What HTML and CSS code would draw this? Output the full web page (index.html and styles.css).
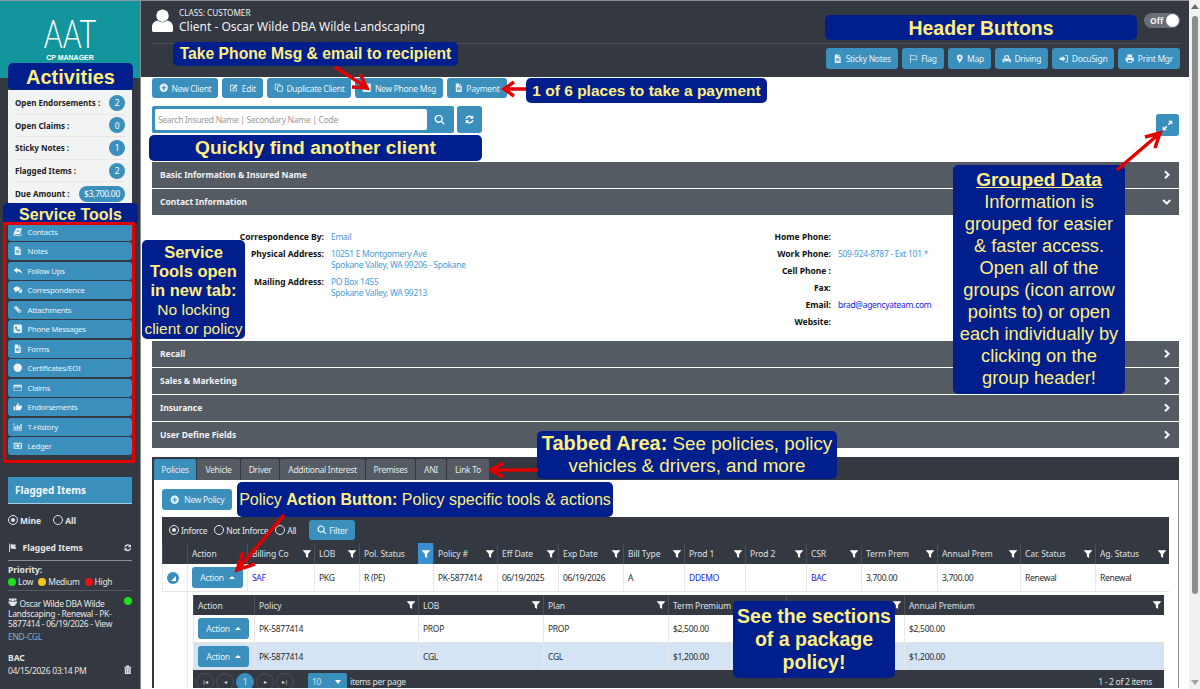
FILE: index.html
```html
<!DOCTYPE html>
<html lang="en">

<head>
    <meta charset="UTF-8" />
    <title>Client - Oscar Wilde DBA Wilde Landscaping</title>
    <link rel="stylesheet" href="styles.css">
</head>

<body>
    <svg class="defs" width="0" height="0">
        <symbol id="i-plus" viewBox="0 0 16 16"><path fill-rule="evenodd" d="M8 1a7 7 0 1 1 0 14A7 7 0 0 1 8 1zM7 4v3H4v2h3v3h2V9h3V7H9V4z"/></symbol>
        <symbol id="i-edit" viewBox="0 0 16 16"><path d="M2 3h8L8.500 4.500H3.500v8h8V9L13 7.500V14H2z"/><path d="M12.500 2 14.500 4 8 10.500 5.500 11 6 8.500z"/></symbol>
        <symbol id="i-copy" viewBox="0 0 16 16"><path fill="none" stroke="currentColor" stroke-width="1.400" d="M6 5h8v9H6zM6 11H2V2h8v3"/></symbol>
        <symbol id="i-phone" viewBox="0 0 16 16"><path fill-rule="evenodd" d="M3 1h10a2 2 0 0 1 2 2v10a2 2 0 0 1-2 2H3a2 2 0 0 1-2-2V3a2 2 0 0 1 2-2zm2 2.500L3.500 5c0 4 3.500 7.500 7.500 7.500l1.500-1.500-2.500-2-1.200 1C7.500 9.500 6.500 8.500 6 7.200l1-1.200z"/></symbol>
        <symbol id="i-file" viewBox="0 0 16 16"><path fill-rule="evenodd" d="M3 1h6v4h4v10H3zM10 1l3 3h-3zM5 7v1h6V7zm0 2v1h6V9zm0 2v1h6v-1z"/></symbol>
        <symbol id="i-search" viewBox="0 0 16 16"><path fill-rule="evenodd" d="M7 1a6 6 0 0 1 4.800 9.500L15.500 14 14 15.500l-3.600-3.700A6 6 0 1 1 7 1zm0 2a4 4 0 1 0 0 8 4 4 0 0 0 0-8z"/></symbol>
        <symbol id="i-refresh" viewBox="0 0 16 16"><path d="M13.500 2v5h-5l1.800-1.800A4 4 0 0 0 4.200 7H2.100a6 6 0 0 1 9.700-3.300zM2.500 14V9h5l-1.800 1.800A4 4 0 0 0 11.800 9h2.100a6 6 0 0 1-9.700 3.300z"/></symbol>
        <symbol id="i-flag" viewBox="0 0 16 16"><path d="M2 1h1.500v14H2zM4.500 2.500c3-1.500 5 1 9 0L12 6.500l2 3c-4 1.500-6-1-9.500 0z"/></symbol>
        <symbol id="i-flag-o" viewBox="0 0 16 16"><path d="M2 1h1.200v14H2z"/><path fill="none" stroke="currentColor" stroke-width="1.200" d="M3.500 3c3.500-1.500 6 1 10 0l-1.500 3.500 1.500 3c-4 1-6.500-1.500-10 0"/></symbol>
        <symbol id="i-marker" viewBox="0 0 16 16"><path fill-rule="evenodd" d="M8 1a5 5 0 0 1 5 5c0 3-5 9-5 9S3 9 3 6a5 5 0 0 1 5-5zm0 3a2 2 0 1 0 0 4 2 2 0 0 0 0-4z"/></symbol>
        <symbol id="i-car" viewBox="0 0 16 16"><path fill-rule="evenodd" d="M5 2h6l2 6 2 1v5h-3v-2H4v2H1V9l2-1zm1 2L5 7.500h6L10 4zM3 9.500v1.500h2V9.500zm8 0v1.500h2V9.500z"/></symbol>
        <symbol id="i-signin" viewBox="0 0 16 16"><path d="M1 6h5V3l5 5-5 5v-3H1z"/><path d="M10 2h5v12h-5v-1.500h3.500v-9H10z"/></symbol>
        <symbol id="i-print" viewBox="0 0 16 16"><path fill-rule="evenodd" d="M4 1h8v4H4zM1 6h14v6h-3v3H4v-3H1zm4 4v4h6v-4z"/></symbol>
        <symbol id="i-expand" viewBox="0 0 16 16"><path d="M9 1h6v6l-2.200-2.200-2.800 2.800L8.400 6l2.800-2.800zM7 15H1V9l2.200 2.200L6 8.400 7.600 10l-2.800 2.800z"/></symbol>
        <symbol id="i-right" viewBox="0 0 16 16"><path fill="none" stroke="currentColor" stroke-width="3.500" d="M5 2l6 6-6 6"/></symbol>
        <symbol id="i-down" viewBox="0 0 16 16"><path fill="none" stroke="currentColor" stroke-width="3.500" d="M2 5l6 6 6-6"/></symbol>
        <symbol id="i-user" viewBox="0 0 24 24"><circle cx="12" cy="7" r="6.500"/><path d="M1 23v-4c0-5 4-6.500 6-7 3 2.500 7 2.500 10 0 2 .500 6 2 6 7v4a2 2 0 0 1-2 1H3a2 2 0 0 1-2-1z"/></symbol>
        <symbol id="i-book" viewBox="0 0 16 16"><path fill-rule="evenodd" d="M5 2h10l-3 10H3c-1 0-1 2 0 2h10l1-3 1 .500L13.500 15H3c-2.500 0-2.500-2-2-4zm1.500 3v1h5V5zm-.500 2v1h5V7z"/></symbol>
        <symbol id="i-reply" viewBox="0 0 16 16"><path d="M7 2v3c5 0 8 3 8 9-1.500-3.500-4-5-8-5v3L1 7z"/></symbol>
        <symbol id="i-comments" viewBox="0 0 16 16"><path d="M6.500 2.500c3 0 5.500 1.700 5.500 4s-2.500 4-5.500 4l-3 2 .500-2.500C2 9.500 1 8 1 6.500c0-2.300 2.500-4 5.500-4z"/><path d="M13 6c1.500.700 2.500 2 2.500 3.500 0 1.200-.700 2-1.500 2.800l.500 2-2.500-1.500c-1.500.200-3-.300-4-1.300 3 0 5.500-2.500 5-5.500z"/></symbol>
        <symbol id="i-clip" viewBox="0 0 16 16"><path d="M3 2.500a2.500 2.500 0 0 1 3.500 0l7 7a2.500 2.500 0 0 1-3.500 3.500L4 7a1.500 1.500 0 0 1 2-2l5 5-1 1-5-5v.500l6 6a1.200 1.200 0 0 0 1.500-1.500l-7-7a1 1 0 0 0-1.500 1.500l6 6-1 1-6-6A2.500 2.500 0 0 1 3 2.500z"/></symbol>
        <symbol id="i-cert" viewBox="0 0 16 16"><circle cx="8" cy="8" r="7"/></symbol>
        <symbol id="i-card" viewBox="0 0 16 16"><path fill-rule="evenodd" d="M1 3h14v10H1zm1 3v1h12V6zm0 2v4h12V8z" /></symbol>
        <symbol id="i-thumb" viewBox="0 0 16 16"><path d="M1 7h3v7H1zM5 7l3-5.500c1.500 0 2 1 1.500 2.500L9 6h5c1.500 0 1.500 2 .700 2.500.500 1 0 1.800-.700 2 .300 1-.200 1.800-.800 2 0 1-.700 1.500-1.700 1.500H7c-1 0-2-.500-2-1z"/></symbol>
        <symbol id="i-chart" viewBox="0 0 16 16"><path d="M1 2h1.200v11H15v1.200H1zM3.500 8h2v4h-2zM6.500 5h2v7h-2zM9.500 7h2v5h-2zM12.500 3h2v9h-2z"/></symbol>
        <symbol id="i-money" viewBox="0 0 16 16"><path fill-rule="evenodd" d="M1 3h14v10H1zm1.500 1.500v7h11v-7zM8 5.500a2.500 2.500 0 1 1 0 5 2.500 2.500 0 0 1 0-5zM3.500 6h1v4h-1zm8 0h1v4h-1z"/></symbol>
        <symbol id="i-filter" viewBox="0 0 16 16"><path d="M1 2h14L9.800 8v6.500L6.200 12V8z"/></symbol>
        <symbol id="i-trash" viewBox="0 0 16 16"><path fill-rule="evenodd" d="M6 1h4l1 2h3v1.500H2V3h3zM3 5.500h10V15H3zM5.500 7v6.500h1V7zm4 0v6.500h1V7z"/></symbol>
        <symbol id="i-users" viewBox="0 0 16 16"><circle cx="3.500" cy="4" r="2"/><circle cx="12.500" cy="4" r="2"/><circle cx="8" cy="5" r="2.800"/><path d="M1 7h3l1 1v6H3V11H1zM15 7h-3l-1 1v6h2V11h2zM5 8.500h6V15H5z"/></symbol>
    </svg>

    <div class="sidebar">
        <div class="logo">
            <div class="logo-name">AAT</div>
            <div class="logo-sub">CP MANAGER</div>
        </div>

        <div class="activities">
            <div class="activity"><b>Open Endorsements :</b><span class="badge">2</span></div>
            <div class="activity"><b>Open Claims :</b><span class="badge">0</span></div>
            <div class="activity"><b>Sticky Notes :</b><span class="badge">1</span></div>
            <div class="activity"><b>Flagged Items :</b><span class="badge">2</span></div>
            <div class="activity"><b>Due Amount :</b><span class="badge badge-wide">$3,700.00</span></div>
        </div>

        <div class="tools">
            <a class="tool" href="#"><svg class="ico"><use href="#i-book"/></svg>Contacts</a>
            <a class="tool" href="#"><svg class="ico"><use href="#i-file"/></svg>Notes</a>
            <a class="tool" href="#"><svg class="ico"><use href="#i-reply"/></svg>Follow Ups</a>
            <a class="tool" href="#"><svg class="ico"><use href="#i-comments"/></svg>Correspondence</a>
            <a class="tool" href="#"><svg class="ico"><use href="#i-clip"/></svg>Attachments</a>
            <a class="tool" href="#"><svg class="ico"><use href="#i-phone"/></svg>Phone Messages</a>
            <a class="tool" href="#"><svg class="ico"><use href="#i-file"/></svg>Forms</a>
            <a class="tool" href="#"><svg class="ico"><use href="#i-cert"/></svg>Certificates/EOI</a>
            <a class="tool" href="#"><svg class="ico"><use href="#i-card"/></svg>Claims</a>
            <a class="tool" href="#"><svg class="ico"><use href="#i-thumb"/></svg>Endorsements</a>
            <a class="tool" href="#"><svg class="ico"><use href="#i-chart"/></svg>T-History</a>
            <a class="tool" href="#"><svg class="ico"><use href="#i-money"/></svg>Ledger</a>
        </div>

        <div class="flag-head">Flagged Items</div>
        <div class="flag-scope">
            <span class="radio on"></span><b>Mine</b>
            <span class="radio flag-all"></span><b>All</b>
        </div>
        <div class="flag-title">
            <svg class="ico"><use href="#i-flag"/></svg><b>Flagged Items</b>
            <svg class="ico flag-reload"><use href="#i-refresh"/></svg>
        </div>
        <div class="priority">
            <b>Priority:</b>
            <div class="legend">
                <i class="dot dot-green"></i>Low <i class="dot dot-yellow"></i>Medium <i class="dot dot-red"></i>High
            </div>
        </div>
        <div class="flag-item">
            <i class="dot dot-green flag-dot"></i>
            <svg class="ico"><use href="#i-users"/></svg> Oscar Wilde DBA Wilde Landscaping - Renewal - PK-5877414 - 06/19/2026 - View
            <div class="flag-link">END-CGL</div>
            <div class="flag-by">BAC</div>
            <div class="flag-date">04/15/2026 03:14 PM<svg class="ico"><use href="#i-trash"/></svg></div>
        </div>
    </div>

    <div class="main">
        <div class="header">
            <div class="client">
                <svg class="client-ico"><use href="#i-user"/></svg>
                <div>
                    <div class="client-class">CLASS: CUSTOMER</div>
                    <div class="client-name">Client - Oscar Wilde DBA Wilde Landscaping</div>
                </div>
                <div class="toggle"><span>Off</span><i></i></div>
            </div>
            <div class="header-btns">
                <a class="btn" href="#"><svg class="ico"><use href="#i-file"/></svg>Sticky Notes</a>
                <a class="btn" href="#"><svg class="ico"><use href="#i-flag-o"/></svg>Flag</a>
                <a class="btn" href="#"><svg class="ico"><use href="#i-marker"/></svg>Map</a>
                <a class="btn" href="#"><svg class="ico"><use href="#i-car"/></svg>Driving</a>
                <a class="btn" href="#"><svg class="ico"><use href="#i-signin"/></svg>DocuSign</a>
                <a class="btn" href="#"><svg class="ico"><use href="#i-print"/></svg>Print Mgr</a>
            </div>
        </div>

        <div class="content">
            <div class="actions">
                <a class="btn" href="#"><svg class="ico"><use href="#i-plus"/></svg>New Client</a>
                <a class="btn" href="#"><svg class="ico"><use href="#i-edit"/></svg>Edit</a>
                <a class="btn" href="#"><svg class="ico"><use href="#i-copy"/></svg>Duplicate Client</a>
                <a class="btn" href="#"><svg class="ico"><use href="#i-phone"/></svg>New Phone Msg</a>
                <a class="btn" href="#"><svg class="ico"><use href="#i-file"/></svg>Payment</a>
            </div>

            <div class="search-row">
                <div class="search">
                    <input type="text" placeholder="Search Insured Name | Secondary Name | Code">
                    <span class="search-btn"><svg class="ico"><use href="#i-search"/></svg></span>
                </div>
                <span class="square-btn"><svg class="ico"><use href="#i-refresh"/></svg></span>
                <span class="square-btn expand-btn"><svg class="ico"><use href="#i-expand"/></svg></span>
            </div>

            <div class="section">Basic Information &amp; Insured Name<svg class="ico"><use href="#i-right"/></svg></div>
            <div class="section">Contact Information<svg class="ico"><use href="#i-down"/></svg></div>
            <div class="contact">
                <div class="contact-col">
                    <b>Correspondence By:</b><span>Email</span>
                    <b>Physical Address:</b><span>10251 E Montgomery Ave<br>Spokane Valley, WA 99206 - Spokane</span>
                    <b>Mailing Address:</b><span>PO Box 1455<br>Spokane Valley, WA 99213</span>
                </div>
                <div class="contact-col contact-right">
                    <b>Home Phone:</b><span></span>
                    <b>Work Phone:</b><span>509-924-8787 - Ext 101 *</span>
                    <b>Cell Phone :</b><span></span>
                    <b>Fax:</b><span></span>
                    <b>Email:</b><span class="link">brad@agencyateam.com</span>
                    <b>Website:</b><span></span>
                </div>
            </div>
            <div class="section">Recall<svg class="ico"><use href="#i-right"/></svg></div>
            <div class="section">Sales &amp; Marketing<svg class="ico"><use href="#i-right"/></svg></div>
            <div class="section">Insurance<svg class="ico"><use href="#i-right"/></svg></div>
            <div class="section">User Define Fields<svg class="ico"><use href="#i-right"/></svg></div>

            <div class="tabs">
                <span class="tab tab-on tab-policies">Policies</span>
                <span class="tab tab-vehicle">Vehicle</span>
                <span class="tab tab-driver">Driver</span>
                <span class="tab tab-ai">Additional Interest</span>
                <span class="tab tab-premises">Premises</span>
                <span class="tab tab-ani">ANI</span>
                <span class="tab tab-link">Link To</span>
            </div>

            <div class="tab-panel">
                <a class="btn new-policy" href="#"><svg class="ico"><use href="#i-plus"/></svg>New Policy</a>

                <div class="grid">
                    <div class="grid-tools">
                        <span class="radio on"></span><span class="radio-label">Inforce</span>
                        <span class="radio"></span><span class="radio-label">Not Inforce</span>
                        <span class="radio"></span><span class="radio-label">All</span>
                        <a class="btn filter-btn" href="#"><svg class="ico"><use href="#i-search"/></svg>Filter</a>
                    </div>
                    <div class="row policy-cols head">
                        <div></div>
                        <div>Action</div>
                        <div>Billing Co<svg class="fil"><use href="#i-filter"/></svg></div>
                        <div>LOB<svg class="fil"><use href="#i-filter"/></svg></div>
                        <div>Pol. Status<span class="fil-on"><svg class="fil"><use href="#i-filter"/></svg></span></div>
                        <div>Policy #<svg class="fil"><use href="#i-filter"/></svg></div>
                        <div>Eff Date<svg class="fil"><use href="#i-filter"/></svg></div>
                        <div>Exp Date<svg class="fil"><use href="#i-filter"/></svg></div>
                        <div>Bill Type<svg class="fil"><use href="#i-filter"/></svg></div>
                        <div>Prod 1<svg class="fil"><use href="#i-filter"/></svg></div>
                        <div>Prod 2<svg class="fil"><use href="#i-filter"/></svg></div>
                        <div>CSR<svg class="fil"><use href="#i-filter"/></svg></div>
                        <div>Term Prem<svg class="fil"><use href="#i-filter"/></svg></div>
                        <div>Annual Prem<svg class="fil"><use href="#i-filter"/></svg></div>
                        <div>Car. Status<svg class="fil"><use href="#i-filter"/></svg></div>
                        <div>Ag. Status<svg class="fil"><use href="#i-filter"/></svg></div>
                    </div>
                    <div class="row policy-cols body-row">
                        <div><span class="row-toggle"></span></div>
                        <div><a class="btn action-btn" href="#">Action<i class="caret"></i></a></div>
                        <div class="link">SAF</div>
                        <div>PKG</div>
                        <div>R (PE)</div>
                        <div>PK-5877414</div>
                        <div>06/19/2025</div>
                        <div>06/19/2026</div>
                        <div>A</div>
                        <div class="link">DDEMO</div>
                        <div></div>
                        <div class="link">BAC</div>
                        <div>3,700.00</div>
                        <div>3,700.00</div>
                        <div>Renewal</div>
                        <div>Renewal</div>
                    </div>
                    <div class="detail">
                        <div class="row section-cols head head-sub">
                            <div>Action</div>
                            <div>Policy<svg class="fil"><use href="#i-filter"/></svg></div>
                            <div>LOB<svg class="fil"><use href="#i-filter"/></svg></div>
                            <div>Plan<svg class="fil"><use href="#i-filter"/></svg></div>
                            <div>Term Premium</div>
                            <div><svg class="fil fil-end"><use href="#i-filter"/></svg></div>
                            <div>Annual Premium<svg class="fil"><use href="#i-filter"/></svg></div>
                        </div>
                        <div class="row section-cols body-row">
                            <div><a class="btn action-btn" href="#">Action<i class="caret"></i></a></div>
                            <div>PK-5877414</div>
                            <div>PROP</div>
                            <div>PROP</div>
                            <div>$2,500.00</div>
                            <div></div>
                            <div>$2,500.00</div>
                        </div>
                        <div class="row section-cols body-row row-alt">
                            <div><a class="btn action-btn" href="#">Action<i class="caret"></i></a></div>
                            <div>PK-5877414</div>
                            <div>CGL</div>
                            <div>CGL</div>
                            <div>$1,200.00</div>
                            <div></div>
                            <div>$1,200.00</div>
                        </div>
                        <div class="pager">
                            <span class="page">|◂</span>
                            <span class="page">◂</span>
                            <span class="page page-on">1</span>
                            <span class="page">▸</span>
                            <span class="page">▸|</span>
                            <span class="page-size">10<i class="caret caret-down"></i></span>
                            <span>items per page</span>
                            <span class="pager-info">1 - 2 of 2 items</span>
                        </div>
                    </div>
                </div>
            </div>
        </div>
    </div>

    <div class="scrollbar">
        <i class="scroll-up"></i>
        <i class="scroll-thumb"></i>
        <i class="scroll-down"></i>
    </div>

    <!-- callouts drawn over the page -->
    <div class="note note-activities"><b>Activities</b></div>
    <div class="note note-tools"><b>Service Tools</b></div>
    <div class="tools-frame"></div>
    <div class="note note-phone"><b>Take Phone Msg &amp; email to recipient</b></div>
    <div class="note note-payment"><b>1 of 6 places to take a payment</b></div>
    <div class="note note-find"><b>Quickly find another client</b></div>
    <div class="note note-header"><b>Header Buttons</b></div>
    <div class="note note-open"><b>Service<br>Tools open<br>in new tab:</b><br><span class="note-thin">No locking<br>client or policy</span></div>
    <div class="note note-grouped"><b class="underline">Grouped Data</b><br>Information is<br>grouped for easier<br>&amp; faster access.<br>Open all of the<br>groups (icon arrow<br>points to) or open<br>each individually by<br>clicking on the<br>group header!</div>
    <div class="note note-tabbed"><b>Tabbed Area:</b> See policies, policy<br>vehicles &amp; drivers, and more</div>
    <div class="note note-action"><span>Policy <b>Action Button:</b> Policy specific tools &amp; actions</span></div>
    <div class="note note-sections"><b>See the sections<br>of a package<br>policy!</b></div>

    <svg class="arrows" viewBox="0 0 1200 689">
        <path d="M335 67 366 87M352 87 367 88 360 74"/>
        <path d="M526 89H505M514 82 504 89 514 96"/>
        <path d="M1117 170 1159 134M1145 137 1160 133 1155 148"/>
        <path d="M538 470H492M503 463 491 470 503 477"/>
        <path d="M284 515 239 568M243 552 237 570 255 564"/>
    </svg>
</body>

</html>
```
FILE: styles.css
```css
* {
    box-sizing: border-box;
}

body {
    margin: 0;
    width: 1200px;
    height: 689px;
    overflow: hidden;
    position: relative;
    display: flex;
    background: #fff;
    color: #2a2a2a;
    font-family: "Noto Sans", sans-serif;
    font-size: 8.5px;
    letter-spacing: -0.3px;
}

b {
    font-size: 8.5px;
    letter-spacing: 0;
}

a {
    text-decoration: none;
    color: inherit;
}

.defs {
    position: absolute;
}

.ico {
    width: 9.5px;
    height: 9.5px;
    fill: currentColor;
    flex: none;
}

/* sidebar */
.sidebar {
    width: 141px;
    flex: none;
    height: 689px;
    overflow: hidden;
    background: #343841;
    border-right: 1px solid #8b8e93;
    color: #e4e6e8;
}

.logo {
    height: 78px;
    background: #12959c;
    border-top: 1px solid #8a9a9c;
    color: #fff;
    text-align: center;
    padding-top: 13px;
    letter-spacing: 0;
}

.logo-name {
    font-family: Lato, sans-serif;
    font-weight: 300;
    font-size: 39px;
    line-height: 39px;
    transform: scaleX(0.74);
}

.logo-sub {
    font-family: "Liberation Sans", sans-serif;
    font-weight: bold;
    font-size: 7px;
    line-height: 9px;
}

.activities {
    margin: 12px 8px 0;
    padding: 2px 7px 0;
    height: 113px;
    background: #f2f3f3;
    color: #222;
}

.activity {
    height: 22.6px;
    display: flex;
    align-items: center;
    justify-content: space-between;
    border-bottom: 1px solid #e6e7e8;
}

.activity b {
    font-size: 8px;
}

.activity:last-child {
    border-bottom: 0;
}

.badge {
    width: 16px;
    height: 16px;
    border-radius: 8px;
    background: #3a8fbd;
    color: #fff;
    display: flex;
    align-items: center;
    justify-content: center;
}

.badge-wide {
    width: 46px;
}

.tools {
    margin: 19.5px 8px 0;
    display: flex;
    flex-direction: column;
    gap: 1.5px;
}

.tool {
    height: 18px;
    background: #3a8fbd;
    border-radius: 3px;
    color: #eaf3f8;
    font-size: 7.8px;
    letter-spacing: -0.25px;
    display: flex;
    align-items: center;
    gap: 5px;
    padding-left: 5px;
}

.flag-head {
    margin: 22px 8px 0;
    height: 27px;
    background: #3a8fbd;
    border-bottom: 1px solid #a5cbe0;
    color: #f2f7fa;
    font-size: 10px;
    font-weight: bold;
    line-height: 26px;
    padding-left: 7px;
    letter-spacing: 0;
}

.flag-scope {
    margin: 9px 8px 0;
    height: 14px;
    display: flex;
    align-items: center;
    gap: 2px;
}

.radio {
    width: 10px;
    height: 10px;
    border: 1px solid currentColor;
    border-radius: 50%;
    display: inline-block;
    flex: none;
    position: relative;
}

.radio.on::after {
    content: "";
    position: absolute;
    inset: 2px;
    border-radius: 50%;
    background: currentColor;
}

.flag-all {
    margin-left: 10px;
}

.flag-title {
    margin: 14px 8px 0;
    padding-bottom: 6px;
    border-bottom: 1px solid #8b8e93;
    display: flex;
    align-items: center;
    gap: 5px;
    height: 20px;
}

.flag-reload {
    margin-left: auto;
}

.priority {
    margin: 3px 8px 0;
    padding-bottom: 3px;
    height: 27px;
    border-bottom: 1px solid #55595f;
    line-height: 12px;
}

.legend {
    display: flex;
    align-items: center;
    gap: 2px;
}

.dot {
    width: 8px;
    height: 8px;
    border-radius: 50%;
    display: inline-block;
    flex: none;
}

.dot-green {
    background: #1fe01f;
}

.dot-yellow {
    background: #f5c518;
    margin-left: 3px;
}

.dot-red {
    background: #f01010;
    margin-left: 3px;
}

.flag-item {
    margin: 6px 8px 0;
    line-height: 10px;
    position: relative;
    padding-right: 4px;
}

.flag-dot {
    float: right;
    margin: 0 -4px 0 4px;
}

.flag-link {
    color: #7fb3d5;
    margin-top: 2px;
    line-height: 11px;
}

.flag-by {
    font-weight: bold;
    margin-top: 10px;
    line-height: 11px;
    letter-spacing: 0;
}

.flag-date {
    display: flex;
    justify-content: space-between;
    margin: 2px -4px 0 0;
    line-height: 11px;
}

/* main area */
.main {
    flex: 1;
    min-width: 0;
}

.header {
    height: 77px;
    background: #343841;
    border-top: 1px solid #8b8e93;
    color: #f0f1f2;
    padding: 0 9px 0 10px;
}

.client {
    height: 43px;
    display: flex;
    align-items: center;
    gap: 5px;
    border-bottom: 1px solid #4b4f57;
    padding-bottom: 3px;
}

.client-ico {
    width: 23px;
    height: 27px;
    fill: #fff;
}

.client-class {
    font-size: 8.2px;
    line-height: 11px;
    margin-top: 1px;
    letter-spacing: 0;
}

.client-name {
    font-size: 12px;
    line-height: 18px;
    letter-spacing: 0;
}

.toggle {
    width: 36px;
    height: 15px;
    border-radius: 8px;
    background: #6b6e73;
    margin-left: auto;
    display: flex;
    align-items: center;
    justify-content: space-between;
    padding: 0 1px 0 6px;
    font-weight: bold;
    letter-spacing: 0;
}

.toggle i {
    width: 13px;
    height: 13px;
    border-radius: 50%;
    background: #fff;
}

.btn {
    background: #3a8fbd;
    color: #e6f1f7;
    border-radius: 3px;
    height: 21px;
    display: inline-flex;
    align-items: center;
    justify-content: center;
    gap: 3px;
    padding: 0 7px;
    white-space: nowrap;
}

.header-btns {
    margin-top: 4px;
    display: flex;
    justify-content: flex-end;
    gap: 4px;
}

.content {
    padding: 1px 10px 0 11px;
}

.actions {
    display: flex;
    gap: 4px;
}

.actions .btn {
    height: 20px;
}

.search-row {
    margin-top: 8px;
    height: 27px;
    display: flex;
    gap: 3px;
    margin-bottom: 29px;
}

.search {
    width: 302px;
    display: flex;
    background: #3a8fbd;
    border-radius: 2px;
    padding: 3px;
}

.search input {
    width: 272px;
    border: 0;
    border-radius: 2px;
    background: #fff;
    padding: 0 3px;
    font: inherit;
    letter-spacing: inherit;
}

.search input::placeholder {
    color: #9a9a9a;
}

.search-btn {
    flex: 1;
    display: flex;
    align-items: center;
    justify-content: center;
    color: #fff;
}

.search-btn .ico,
.square-btn .ico {
    width: 11px;
    height: 11px;
}

.square-btn {
    width: 25px;
    background: #3a8fbd;
    border-radius: 3px;
    color: #fff;
    display: flex;
    align-items: center;
    justify-content: center;
}

.expand-btn {
    width: 23px;
    height: 22px;
    margin-left: auto;
    margin-top: 8px;
}

.section {
    height: 26px;
    margin-bottom: 1px;
    background: #545b63;
    color: #f3f4f5;
    font-weight: bold;
    letter-spacing: 0;
    display: flex;
    align-items: center;
    justify-content: space-between;
    padding: 0 8px 1px;
}

.contact {
    height: 125px;
    padding-top: 15px;
    display: flex;
}

.contact-col {
    width: 500px;
    display: grid;
    grid-template-columns: 172px 1fr;
    column-gap: 7px;
    row-gap: 6px;
    align-content: start;
    line-height: 11px;
}

.contact-col b {
    text-align: right;
    color: #111;
}

.contact-col span {
    color: #4a9cd6;
    min-height: 11px;
}

.contact-right {
    grid-template-columns: 179px 1fr;
}

.contact-col .link,
.link {
    color: #2222dd;
}

.tabs {
    margin-top: 9px;
    height: 23px;
    background: #343841;
    padding: 2px 2px 0;
    display: flex;
    align-items: stretch;
}

.tab {
    background: #545b63;
    color: #e6e8ea;
    display: flex;
    align-items: center;
    justify-content: center;
    border-radius: 2px 2px 0 0;
    margin-right: 1px;
}

.tab-on {
    background: #3a8fbd;
}

.tab-policies { width: 42px; }
.tab-vehicle { width: 43px; }
.tab-driver { width: 38px; }
.tab-ai { width: 85px; }
.tab-premises { width: 49px; }
.tab-ani { width: 30px; }
.tab-link { width: 42px; }

.tab-panel {
    border-left: 2px solid #343841;
    border-right: 1px solid #8b8e93;
    padding: 9px 9px 0 8px;
    height: 208px;
}

.new-policy {
    width: 70px;
    gap: 5px;
}

.grid {
    margin-top: 7px;
    width: 1007px;
}

.grid-tools {
    height: 26px;
    background: #343841;
    color: #e6e8ea;
    display: flex;
    align-items: center;
    padding-left: 7px;
}

.radio-label {
    margin: 0 7px 0 2px;
}

.filter-btn {
    height: 20px;
    width: 46px;
    margin-left: 6px;
}

.row {
    display: grid;
}

.policy-cols {
    grid-template-columns: 25px 60px 67px 45px 74px 64px 61px 65px 61px 61px 61px 55px 76px 83px 75px 74px;
}

.section-cols {
    grid-template-columns: 61px 164px 125px 125px 118px 118px 260px;
}

.head {
    height: 21px;
    background: #343841;
    color: #dfe1e4;
    letter-spacing: -0.1px;
}

.head-sub {
    height: 20px;
}

.head > div {
    display: flex;
    align-items: center;
    justify-content: space-between;
    padding: 0 2px 0 4px;
    border-left: 1px solid #4b4f57;
}

.fil {
    width: 10px;
    height: 10px;
    fill: #fff;
    flex: none;
}

.fil-end {
    margin-left: auto;
}

.fil-on {
    width: 15px;
    height: 21px;
    background: #3a8fd0;
    display: flex;
    align-items: center;
    justify-content: center;
    margin-right: -2px;
}

.body-row {
    height: 28px;
    background: #fff;
    border-bottom: 1px solid #e4e4e4;
}

.body-row > div {
    display: flex;
    align-items: center;
    padding-left: 4px;
    border-left: 1px solid #e8e8e8;
}

.row-alt {
    height: 27px;
    background: #d5e4f4;
}

.row-toggle {
    width: 12px;
    height: 12px;
    border-radius: 50%;
    background: #3a8fbd;
    position: relative;
}

.row-toggle::after {
    content: "";
    position: absolute;
    right: 3px;
    bottom: 3px;
    border-left: 5px solid transparent;
    border-bottom: 5px solid #fff;
}

.action-btn {
    width: 51px;
    gap: 5px;
    height: 21px;
}

.caret {
    width: 0;
    height: 0;
    border-left: 3px solid transparent;
    border-right: 3px solid transparent;
    border-bottom: 3px solid #fff;
}

.caret-down {
    border-bottom: 0;
    border-top: 4px solid #fff;
}

.detail {
    height: 96px;
    padding: 3px 5px 0;
    margin-left: 25px;
    border-left: 1px solid #e8e8e8;
}

.pager {
    height: 18px;
    background: #343841;
    color: #dfe1e4;
    display: flex;
    align-items: flex-start;
    gap: 2px;
    padding: 3px 12px 0 3px;
    overflow: hidden;
    line-height: 18px;
}

.page {
    width: 18px;
    height: 18px;
    flex: none;
    border: 1px solid #4b4f57;
    border-radius: 50%;
    display: flex;
    align-items: center;
    justify-content: center;
    font-size: 6px;
}

.page-on {
    background: #3a8fbd;
    border-color: #3a8fbd;
    font-size: 8.5px;
}

.page-size {
    width: 39px;
    height: 18px;
    background: #3a8fbd;
    border-radius: 2px;
    margin: 0 1px 0 12px;
    display: flex;
    align-items: center;
    justify-content: space-between;
    padding: 0 6px 0 4px;
}

.pager-info {
    margin-left: auto;
}

/* scrollbar */
.scrollbar {
    width: 11px;
    flex: none;
    background: #f1f1f1;
    display: flex;
    flex-direction: column;
    align-items: center;
    padding: 4px 0;
}

.scroll-up {
    border-left: 4px solid transparent;
    border-right: 4px solid transparent;
    border-bottom: 5px solid #6a6a6a;
}

.scroll-thumb {
    width: 6px;
    height: 578px;
    margin: 7px 0 auto;
    border-radius: 3px;
    background: #8d8d8d;
}

.scroll-down {
    border-left: 4px solid transparent;
    border-right: 4px solid transparent;
    border-top: 5px solid #a0a0a0;
}

/* callouts */
.note {
    position: absolute;
    background: #001f8c;
    color: #ffee82;
    border-radius: 5px;
    font-family: "Liberation Sans", sans-serif;
    font-size: 17.5px;
    letter-spacing: 0;
    line-height: 22px;
    text-align: center;
    display: flex;
    align-items: center;
    justify-content: center;
    white-space: nowrap;
}

.note b {
    font-size: inherit;
}

.note-open,
.note-grouped,
.note-tabbed,
.note-sections {
    display: block;
}

.note-activities {
    left: 8px;
    top: 63px;
    width: 125px;
    height: 27px;
    font-size: 20px;
}

.note-tools {
    left: 3px;
    top: 203px;
    width: 135px;
    height: 22px;
    padding-top: 2px;
    font-size: 16px;
}

.tools-frame {
    position: absolute;
    left: 3px;
    top: 222px;
    width: 132px;
    height: 241px;
    border: 3px solid #e00000;
}

.note-phone {
    left: 173px;
    top: 42px;
    width: 285px;
    height: 24px;
    font-size: 15.7px;
}

.note-payment {
    left: 526px;
    top: 78px;
    width: 241px;
    height: 25px;
    font-size: 15.5px;
}

.note-find {
    left: 149px;
    top: 135px;
    width: 333px;
    height: 26px;
    font-size: 19.2px;
}

.note-header {
    left: 825px;
    top: 15px;
    width: 312px;
    height: 25px;
    font-size: 19.5px;
}

.note-open {
    left: 142px;
    top: 240px;
    width: 103px;
    height: 99px;
    font-size: 16.5px;
    line-height: 19px;
    padding-top: 3px;
}

.note-thin {
    font-size: 15.5px;
    line-height: 18px;
}

.note-grouped {
    left: 953px;
    top: 165px;
    width: 172px;
    height: 229px;
    font-size: 18.3px;
    line-height: 22px;
    padding-top: 4px;
}

.note-grouped .underline {
    text-decoration: underline;
    font-size: 19px;
}

.note-tabbed {
    left: 537px;
    top: 431px;
    width: 300px;
    height: 48px;
    padding-top: 1px;
    font-size: 18.8px;
}

.note-tabbed b {
    font-size: 20px;
}

.note-action {
    left: 237px;
    top: 482px;
    width: 376px;
    height: 35px;
    font-size: 16px;
}

.note-sections {
    left: 733px;
    top: 601px;
    width: 162px;
    height: 77px;
    font-size: 19.5px;
    line-height: 23px;
    padding-top: 4px;
}

.arrows {
    position: absolute;
    left: 0;
    top: 0;
    width: 1200px;
    height: 689px;
    fill: none;
    stroke: #e00000;
    stroke-width: 3.5px;
}
```
